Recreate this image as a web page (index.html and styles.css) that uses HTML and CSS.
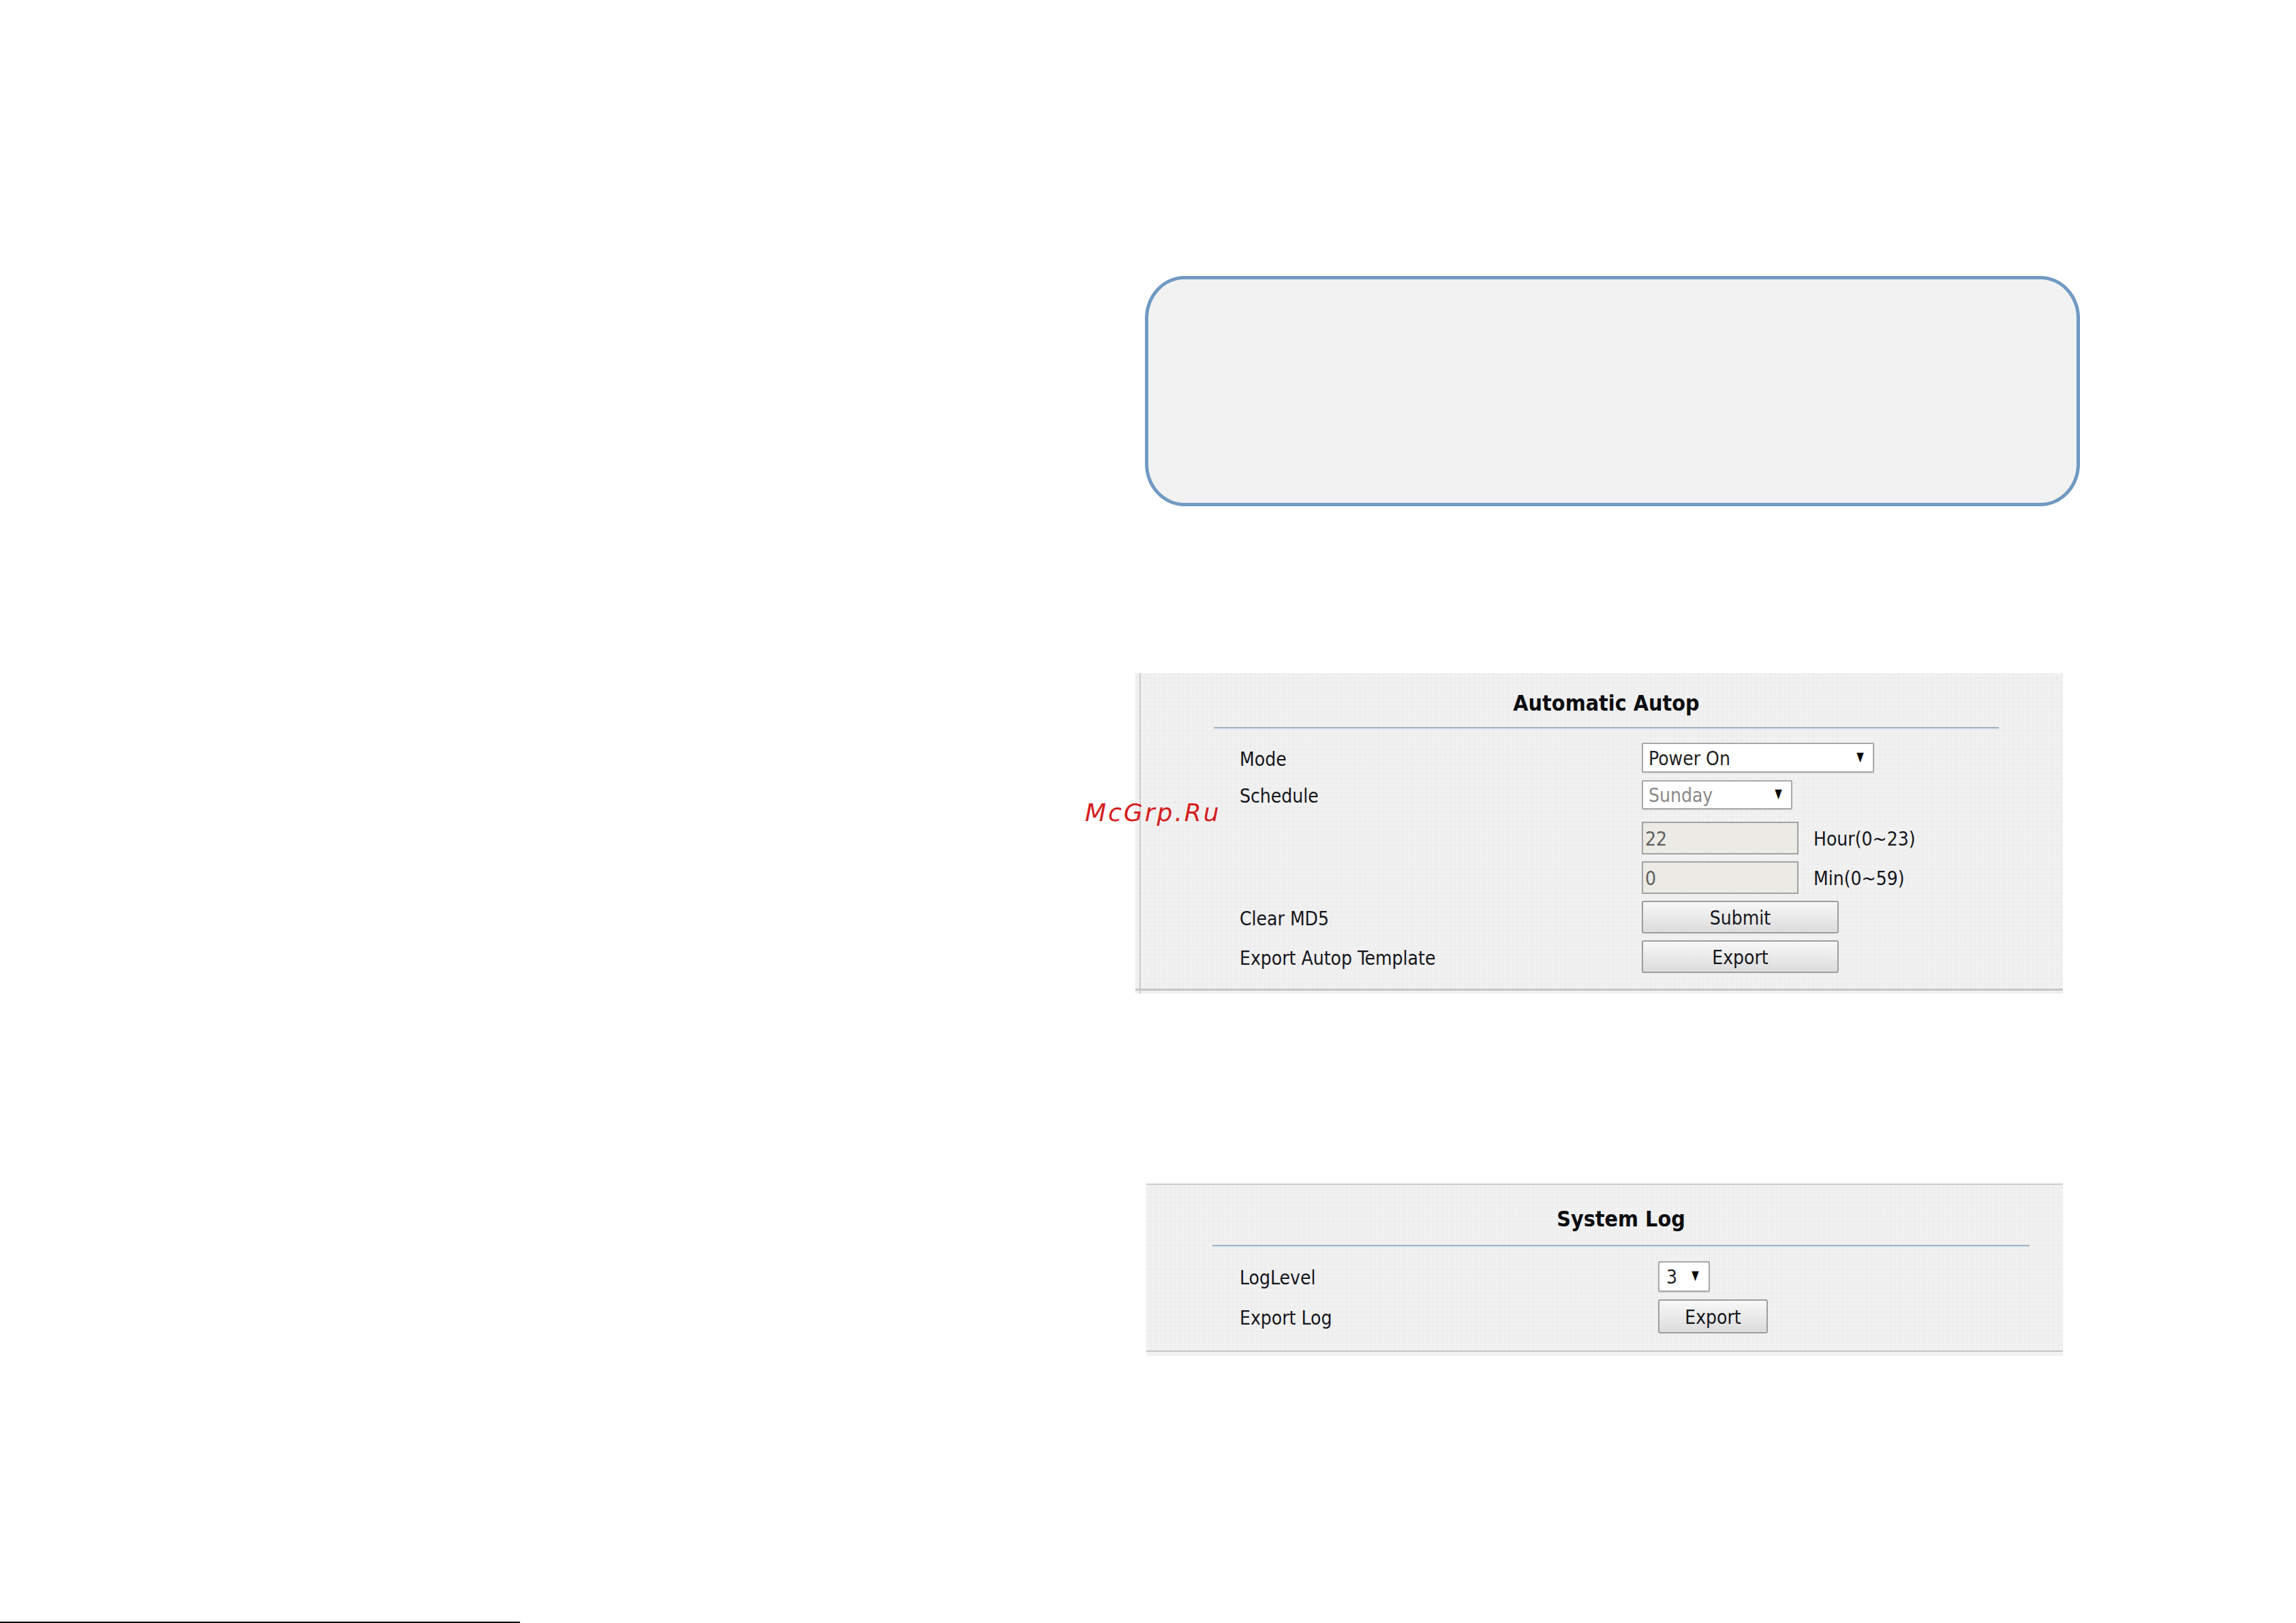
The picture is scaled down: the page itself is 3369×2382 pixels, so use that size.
FILE: index.html
```html
<!DOCTYPE html>
<html lang="en">
<head>
    <meta charset="UTF-8">
    <title>Autop / System Log</title>
    <link rel="stylesheet" href="styles.css">
</head>
<body>
    <div class="page">
        <!-- empty callout box -->
        <div class="note-box"></div>

        <!-- Automatic Autop -->
        <section class="panel panel-autop">
            <div class="panel-head">
                <h2 class="panel-title">Automatic Autop</h2>
            </div>
            <div class="form">
                <div class="form-row first">
                    <label>Mode</label>
                    <div class="cell">
                        <div class="select-wrap">
                            <select class="select select-mode">
                                <option>Power On</option>
                            </select>
                            <span class="arrow">&#9660;</span>
                        </div>
                    </div>
                </div>
                <div class="form-row tight">
                    <label>Schedule</label>
                    <div class="cell">
                        <div class="select-wrap">
                            <select class="select select-day" disabled>
                                <option>Sunday</option>
                            </select>
                            <span class="arrow">&#9660;</span>
                        </div>
                    </div>
                </div>
                <div class="form-row loose">
                    <label></label>
                    <div class="cell">
                        <input class="text-input" type="text" value="22" disabled>
                        <span class="hint">Hour(0~23)</span>
                    </div>
                </div>
                <div class="form-row">
                    <label></label>
                    <div class="cell">
                        <input class="text-input" type="text" value="0" disabled>
                        <span class="hint">Min(0~59)</span>
                    </div>
                </div>
                <div class="form-row">
                    <label>Clear MD5</label>
                    <div class="cell"><button class="btn btn-wide">Submit</button></div>
                </div>
                <div class="form-row">
                    <label>Export Autop Template</label>
                    <div class="cell"><button class="btn btn-wide">Export</button></div>
                </div>
            </div>
        </section>

        <!-- System Log -->
        <section class="panel panel-log">
            <div class="panel-head">
                <h2 class="panel-title">System Log</h2>
            </div>
            <div class="form">
                <div class="form-row first">
                    <label>LogLevel</label>
                    <div class="cell">
                        <div class="select-wrap">
                            <select class="select select-level">
                                <option>3</option>
                            </select>
                            <span class="arrow">&#9660;</span>
                        </div>
                    </div>
                </div>
                <div class="form-row">
                    <label>Export Log</label>
                    <div class="cell"><button class="btn btn-small">Export</button></div>
                </div>
            </div>
        </section>

        <div class="footer-rule"></div>

        <div class="watermark">McGrp.Ru</div>
    </div>
</body>
</html>
```

FILE: styles.css
```css
* {
    margin: 0;
    padding: 0;
    box-sizing: border-box;
}

body {
    background: #fff;
    font-family: 'DejaVu Sans Condensed', 'DejaVu Sans', sans-serif;
    font-stretch: condensed;
    color: #15151c;
    overflow: hidden;
}

.page {
    position: relative;
    width: 3369px;
    height: 2382px;
    padding-top: 405px;
}

/* Callout box */
.note-box {
    margin-left: 1680px;
    width: 1372px;
    height: 338px;
    background: #f2f2f2;
    border: 5px solid #7199c3;
    border-radius: 58px / 62px;
}

/* Panels */
.panel {
    background:
        repeating-linear-gradient(90deg, rgba(0,0,0,0.018) 0 1px, transparent 1px 7px),
        repeating-linear-gradient(0deg, rgba(0,0,0,0.018) 0 1px, transparent 1px 7px),
        #f1f1f1;
}

.panel-autop {
    margin-top: 245px;
    margin-left: 1666px;
    width: 1361px;
    height: 470px;
    padding-top: 24px;
    background:
        linear-gradient(to right, transparent 6px, #cbcbcb 6px, #cbcbcb 8px, transparent 8px),
        linear-gradient(to top, transparent 4px, #c6c6c6 4px, #c6c6c6 7px, transparent 7px),
        repeating-linear-gradient(90deg, rgba(0,0,0,0.018) 0 1px, transparent 1px 7px),
        repeating-linear-gradient(0deg, rgba(0,0,0,0.018) 0 1px, transparent 1px 7px),
        #f1f1f1;
}

.panel-log {
    margin-top: 279px;
    margin-left: 1682px;
    width: 1345px;
    height: 247px;
    padding-top: 30px;
    border-top: 2px solid #cdcdcd;
    border-bottom: 2px solid #c6c6c6;
    box-shadow: 0 6px 0 #f1f1f1;
}

.panel-head {
    text-align: center;
    padding-bottom: 15px;
    border-bottom: 2px solid #a3b2c5;
    box-shadow: 0 2px 0 #e2eaf4;
}

.panel-autop .panel-head {
    margin-left: 115px;
    width: 1152px;
}

.panel-log .panel-head {
    margin-left: 97px;
    width: 1199px;
    padding-bottom: 18px;
}

.panel-title {
    font-size: 32px;
    line-height: 40px;
    font-weight: bold;
    color: #0c0c10;
}

/* Form rows */
.panel-autop .form {
    margin-left: 153px;
}

.panel-log .form {
    margin-left: 137px;
}

.form-row {
    display: grid;
    grid-template-columns: 590px auto;
    align-items: center;
    height: 48px;
    margin-top: 10px;
}

.panel-log .form-row {
    grid-template-columns: 614px auto;
}

.form-row.first {
    margin-top: 19px;
}

.panel-log .form-row.first {
    margin-top: 20px;
}

.form-row.tight {
    margin-top: 6px;
}

.form-row.loose {
    margin-top: 16px;
}

.form-row label {
    font-size: 28px;
    padding-top: 4px;
}

.cell {
    display: flex;
    align-items: center;
    gap: 22px;
}

.hint {
    font-size: 28px;
    padding-top: 3px;
}

/* Selects */
.select-wrap {
    position: relative;
    display: inline-block;
}

.select {
    appearance: none;
    -webkit-appearance: none;
    display: block;
    background: #fff;
    border: 2px solid #a9a9a9;
    border-radius: 2px;
    box-shadow: 0 1px 1px rgba(0,0,0,0.12);
    font-family: inherit;
    font-stretch: condensed;
    font-size: 28px;
    color: #222;
    padding: 2px 0 0 8px;
}

.select-mode {
    width: 341px;
    height: 44px;
}

.select-day {
    width: 221px;
    height: 43px;
    color: #8a8a8a;
    opacity: 1;
}

.select-level {
    width: 76px;
    height: 45px;
    padding-left: 10px;
}

.arrow {
    position: absolute;
    right: 14px;
    top: 50%;
    transform: translateY(-60%) scaleX(0.8);
    font-size: 19px;
    color: #0c0c0c;
    pointer-events: none;
}

.select-level + .arrow {
    right: 15px;
}

/* Text inputs */
.text-input {
    width: 230px;
    height: 48px;
    background: #ebeae4;
    border: 2px solid #a3a3a3;
    font-family: inherit;
    font-stretch: condensed;
    font-size: 28px;
    color: #5e5e5e;
    -webkit-text-fill-color: #5e5e5e;
    padding: 3px 0 0 3px;
}

/* Buttons */
.btn {
    height: 48px;
    background: linear-gradient(#f8f8f8, #dcdcdc);
    border: 2px solid #9d9d9d;
    border-radius: 3px;
    font-family: inherit;
    font-stretch: condensed;
    font-size: 28px;
    color: #15151c;
    padding-top: 3px;
}

.btn-wide {
    width: 289px;
}

.btn-small {
    width: 161px;
    height: 50px;
}

.footer-rule {
    margin-top: 396px;
    width: 763px;
    height: 2px;
    background: #000;
}

/* Watermark over the page */
.watermark {
    position: absolute;
    left: 1592px;
    top: 1175px;
    font-family: 'DejaVu Sans', sans-serif;
    font-stretch: normal;
    font-style: oblique;
    font-size: 36px;
    line-height: 36px;
    letter-spacing: 3px;
    color: #d42020;
}
```
